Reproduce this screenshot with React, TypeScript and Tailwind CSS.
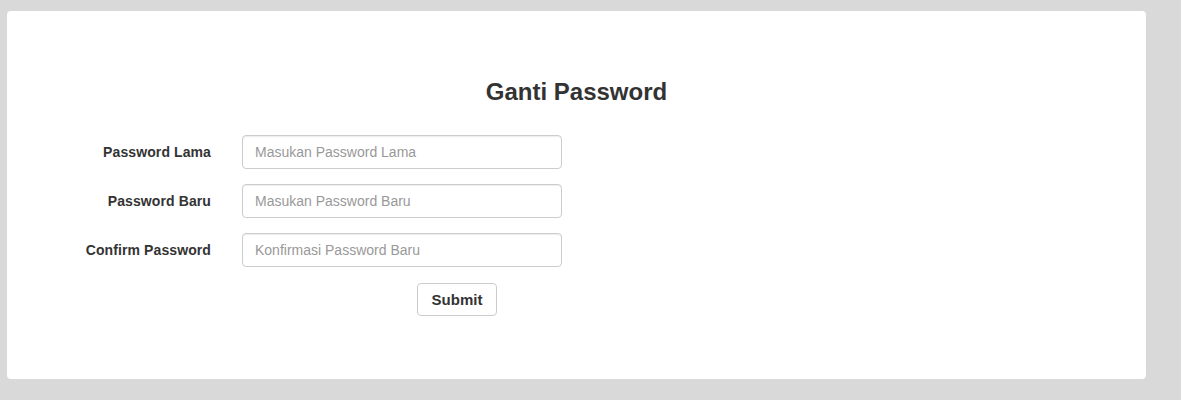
export default function App() {
  const rows = [
    { label: "Password Lama", ph: "Masukan Password Lama" },
    { label: "Password Baru", ph: "Masukan Password Baru" },
    { label: "Confirm Password", ph: "Konfirmasi Password Baru" },
  ];
  return (
    <div
      className="min-h-[400px] bg-[#d9d9d9] pt-[11px] pl-[7px]"
      style={{ fontFamily: '"Liberation Sans", Arial, sans-serif' }}
    >
      <div className="w-[1139px] h-[368px] bg-white rounded-[4px] flex flex-col">
        <h3 className="mt-[68px] text-center text-[24px] font-bold leading-[26.4px] text-[#333]">
          Ganti Password
        </h3>
        <form className="mt-[30px] flex flex-col gap-[15px]" onSubmit={(e) => e.preventDefault()}>
          {rows.map((r) => (
            <div key={r.label} className="flex items-center">
              <label className="w-[204px] text-right text-[14px] font-bold text-[#333] tracking-[0.1px]">{r.label}</label>
              <input
                type="password"
                placeholder={r.ph}
                className="ml-[31px] w-[320px] h-[34px] border border-[#ccc] rounded-[4px] px-[12px] text-[14px] text-[#555] placeholder:text-[#999] outline-none shadow-[inset_0_1px_1px_rgba(0,0,0,0.075)]"
              />
            </div>
          ))}
          <div className="mt-[1px]">
            <button
              type="submit"
              className="ml-[410px] w-[80px] h-[33px] border border-[#ccc] rounded-[4px] bg-white text-[15px] font-bold text-[#333]"
            >
              Submit
            </button>
          </div>
        </form>
      </div>
    </div>
  );
}
